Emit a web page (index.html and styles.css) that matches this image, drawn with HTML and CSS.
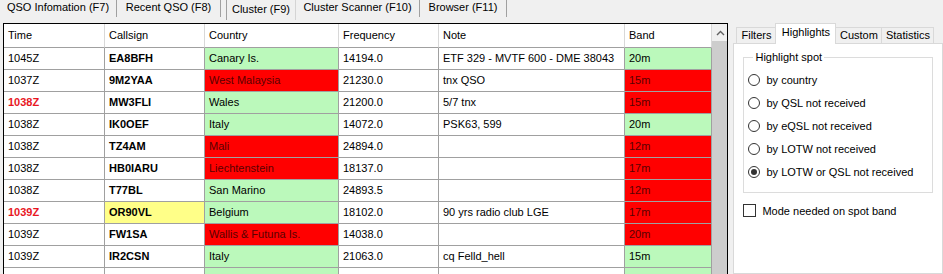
FILE: index.html
```html
<!DOCTYPE html>
<html lang="en">
<head>
  <meta charset="UTF-8" />
  <meta name="viewport" content="width=device-width,initial-scale=1" />
  <title>DX Cluster</title>
  <link rel="stylesheet" href="styles.css">
</head>
<body>

  <!-- Main tabs -->
  <div class="top-tabs">
    <div class="ttab t-info">QSO Infomation (F7)</div>
    <div class="ttab t-recent">Recent QSO (F8)</div>
    <div class="ttab t-cluster active">Cluster (F9)</div>
    <div class="ttab t-scanner">Cluster Scanner (F10)</div>
    <div class="ttab t-browser">Browser (F11)</div>
  </div>

  <div class="main">
    <!-- Spot grid -->
    <div class="grid">
      <table class="spots">
        <colgroup>
          <col class="c-time"><col class="c-call"><col class="c-country">
          <col class="c-freq"><col class="c-note"><col class="c-band">
        </colgroup>
        <thead>
          <tr><th>Time</th><th>Callsign</th><th>Country</th><th>Frequency</th><th>Note</th><th>Band</th></tr>
        </thead>
        <tbody>
          <tr><td>1045Z</td><td class="call">EA8BFH</td><td class="ok">Canary Is.</td><td>14194.0</td><td>ETF 329 - MVTF 600 - DME 38043</td><td class="ok">20m</td></tr>
          <tr><td>1037Z</td><td class="call">9M2YAA</td><td class="need">West Malaysia</td><td>21230.0</td><td>tnx QSO</td><td class="need">15m</td></tr>
          <tr><td class="hot">1038Z</td><td class="call">MW3FLI</td><td class="ok">Wales</td><td>21200.0</td><td>5/7 tnx</td><td class="need">15m</td></tr>
          <tr><td>1038Z</td><td class="call">IK0OEF</td><td class="ok">Italy</td><td>14072.0</td><td>PSK63, 599</td><td class="ok">20m</td></tr>
          <tr><td>1038Z</td><td class="call">TZ4AM</td><td class="need">Mali</td><td>24894.0</td><td></td><td class="need">12m</td></tr>
          <tr><td>1038Z</td><td class="call">HB0IARU</td><td class="need">Liechtenstein</td><td>18137.0</td><td></td><td class="need">17m</td></tr>
          <tr><td>1038Z</td><td class="call">T77BL</td><td class="ok">San Marino</td><td>24893.5</td><td></td><td class="need">12m</td></tr>
          <tr><td class="hot">1039Z</td><td class="call mark">OR90VL</td><td class="ok">Belgium</td><td>18102.0</td><td>90 yrs radio club LGE</td><td class="need">17m</td></tr>
          <tr><td>1039Z</td><td class="call">FW1SA</td><td class="need">Wallis &amp; Futuna Is.</td><td>14038.0</td><td></td><td class="need">20m</td></tr>
          <tr><td>1039Z</td><td class="call">IR2CSN</td><td class="ok">Italy</td><td>21063.0</td><td>cq Felld_hell</td><td class="ok">15m</td></tr>
          <tr><td>1039Z</td><td class="call">IK2BUW/T</td><td class="ok">Italy</td><td>14072.0</td><td>IFR 209 FLORIAN SOMMA</td><td class="ok">20m</td></tr>
        </tbody>
      </table>
      <div class="vscroll">
        <div class="arrow">
          <svg width="9" height="6" viewBox="0 0 9 6"><polyline points="1,5 4.5,1.5 8,5" fill="none" stroke="#606060" stroke-width="1.4"/></svg>
        </div>
        <div class="thumb"></div>
      </div>
    </div>

    <!-- Side panel -->
    <div class="side">
      <div class="stabs">
        <div class="stab s-filters">Filters</div>
        <div class="stab s-high on">Highlights</div>
        <div class="stab s-custom">Custom</div>
        <div class="stab s-stats">Statistics</div>
      </div>
      <div class="page">
        <fieldset class="group">
          <legend>Highlight spot</legend>
          <div class="opt"><span class="radio"></span>by country</div>
          <div class="opt"><span class="radio"></span>by QSL not received</div>
          <div class="opt"><span class="radio"></span>by eQSL not received</div>
          <div class="opt"><span class="radio"></span>by LOTW not received</div>
          <div class="opt"><span class="radio checked"></span>by LOTW or QSL not received</div>
        </fieldset>
        <div class="check"><span class="box"></span>Mode needed on spot band</div>
      </div>
    </div>
  </div>

</body>
</html>
```

FILE: styles.css
```css
* { box-sizing: border-box; margin:0; padding:0 }
body {
  font-family: 'Liberation Sans', Arial, sans-serif;
  font-size: 11px;
  color: #000;
  background: #f0f0f0;
  width: 943px;
  height: 274px;
  overflow: hidden;
}

/* top tab strip */
.top-tabs {
  display: flex;
  align-items: flex-start;
  height: 23px;
}

.ttab {
  height: 17px;
  line-height: 15px;
  text-align: center;
  border-right: 1px solid #a0a0a0;
  white-space: nowrap;
}

.ttab.active {
  height: 20px;
  line-height: 19px;
  margin-left: 5px;
  border-left: 1px solid #a0a0a0;
  border-right-color: #d4d4d4;
}

.t-info    { width: 117px; }
.t-recent  { width: 104px; }
.t-cluster { width: 70px; }
.t-scanner { width: 124px; }
.t-browser { width: 87px; }

.main { display: flex; }

/* grid */
.grid {
  margin-left: 3px;
  width: 727px;
  height: 251px;
  border: 1px solid #000;
  border-bottom: none;
  background: #fff;
  display: flex;
  overflow: hidden;
}

.spots {
  width: 708px;
  table-layout: fixed;
  border-collapse: separate;
  border-spacing: 0;
  flex-shrink: 0;
}

.c-time    { width: 101px; }
.c-call    { width: 100px; }
.c-country { width: 134px; }
.c-freq    { width: 100px; }
.c-note    { width: 186px; }
.c-band    { width: 87px; }

.spots th,
.spots td {
  text-align: left;
  font-weight: normal;
  padding: 0 4px;
  white-space: nowrap;
  overflow: hidden;
  border-right: 1px solid #a0a0a0;
  border-bottom: 1px solid #a0a0a0;
}

.spots th {
  line-height: 23px;
  border-right-color: #d8d8d8;
  border-bottom-color: #a0a0a0;
}

.spots td { line-height: 21px; }

.spots td.call { font-weight: bold; }
.spots td.hot  { font-weight: bold; color: #e8171f; }
.spots td.mark { background: #ffff88; }
.spots td.ok   { background: #bbf9bb; }
.spots td.need { background: #ff0000; color: #5a0000; }

.vscroll {
  width: 17px;
  display: flex;
  flex-direction: column;
  background: #f0f0f0;
}

.arrow {
  height: 17px;
  display: flex;
  align-items: center;
  justify-content: center;
}

.thumb {
  flex: 1;
  width: 16px;
  background: #cdcdcd;
}

/* side panel */
.side {
  margin-left: 5px;
  width: 210px;
}

.stabs {
  display: flex;
  align-items: flex-end;
  height: 20px;
  padding-left: 3px;
}

.stab {
  height: 16px;
  line-height: 15px;
  text-align: center;
  background: #f0f0f0;
  border: 1px solid #d9d9d9;
  border-bottom: none;
  margin-right: -1px;
}

.stab.on {
  height: 21px;
  line-height: 17px;
  background: #fff;
  margin-bottom: -1px;
  position: relative;
  z-index: 1;
}

.s-filters { width: 40px; }
.s-high    { width: 61px; }
.s-custom  { width: 47px; }
.s-stats   { width: 53px; }

.page {
  height: 231px;
  background: #fff;
  border: 1px solid #d9d9d9;
}

.group {
  margin: 6px 0 0 9px;
  width: 190px;
  border: 1px solid #dcdcdc;
  padding: 4px 0 9px 4px;
}

.group legend {
  margin-left: 5px;
  padding: 0 2px;
  line-height: 14px;
  font-weight: normal;
}

.opt {
  display: flex;
  align-items: center;
  height: 23px;
}

.radio {
  width: 12px;
  height: 12px;
  border: 1px solid #333;
  border-radius: 50%;
  margin-right: 6px;
  display: flex;
  align-items: center;
  justify-content: center;
}

.radio.checked::after {
  content: '';
  width: 6px;
  height: 6px;
  border-radius: 50%;
  background: #333;
}

.check {
  display: flex;
  align-items: center;
  height: 13px;
  margin: 11px 0 0 9px;
}

.box {
  width: 13px;
  height: 13px;
  border: 1px solid #333;
  margin-right: 6px;
}
```
